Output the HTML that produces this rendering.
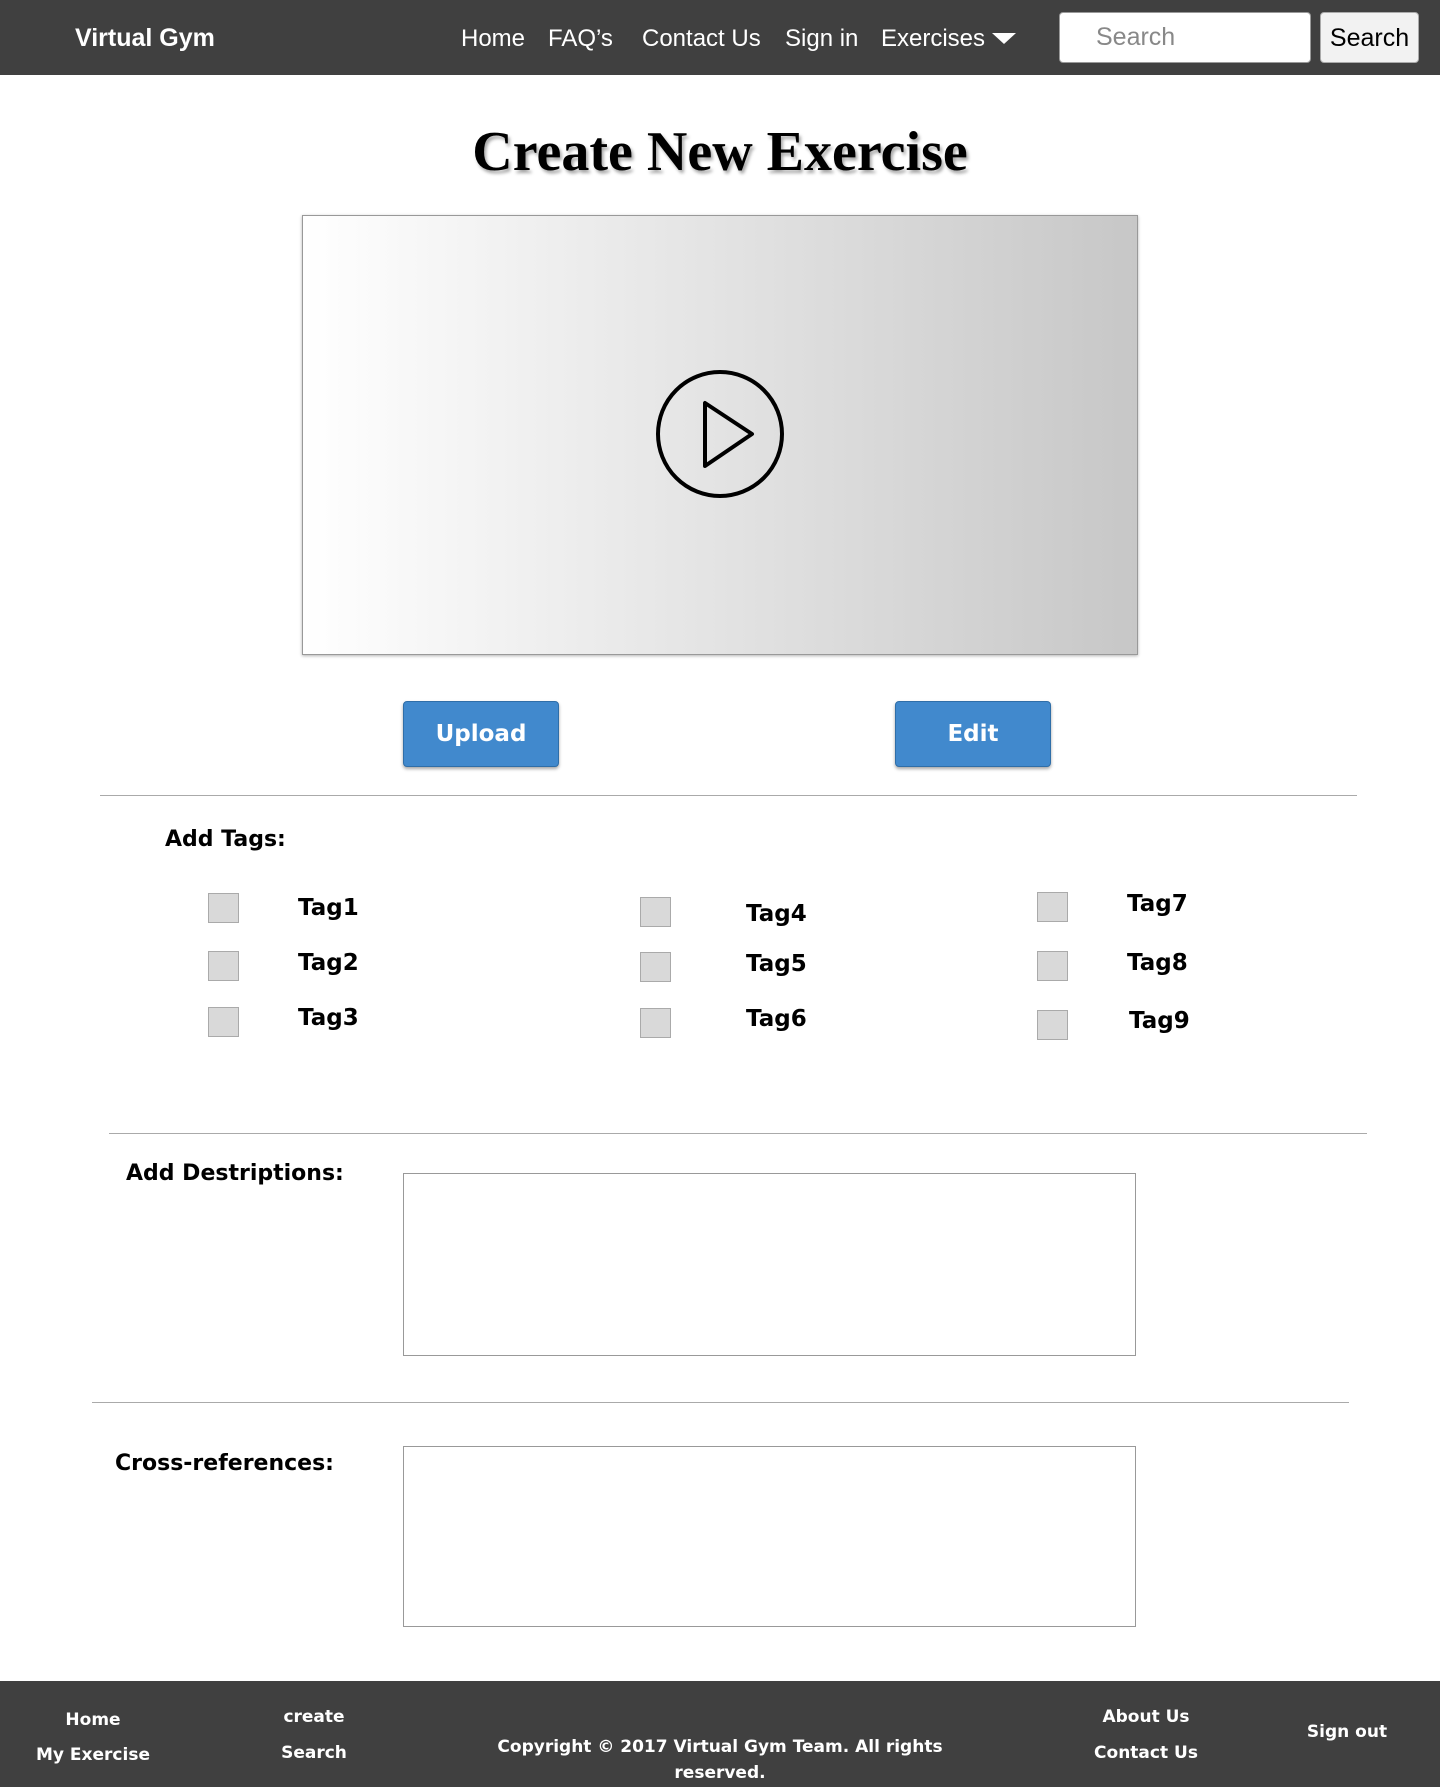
<!DOCTYPE html>
<html><head><meta charset="utf-8"><style>
*{margin:0;padding:0;box-sizing:border-box}
body{width:1440px;height:1787px;position:relative;background:#fff;font-family:"Liberation Sans",sans-serif;overflow:hidden}
.a{position:absolute}
.dj{font-family:"DejaVu Sans",sans-serif;font-weight:bold}
.nav{left:0;top:0;width:1440px;height:75px;background:#404040}
.nl{color:#fff;font-size:24px;top:25px}
.b{font-weight:bold}
.cb{position:absolute;width:31px;height:30px;background:#d9d9d9;border:1px solid #aaa}
.tg{position:absolute;font-family:"DejaVu Sans",sans-serif;font-weight:bold;font-size:23px;color:#000}
.ln{position:absolute;height:1px;background:#aaa}
.ft{position:absolute;color:#fff;font-family:"DejaVu Sans",sans-serif;font-weight:bold;font-size:17px;transform:translateX(-50%);white-space:nowrap;text-align:center}
.lbl{position:absolute;font-family:"DejaVu Sans",sans-serif;font-weight:bold;font-size:22px}
.ta{position:absolute;left:403px;width:733px;border:1px solid #999;background:#fff}
.btn{position:absolute;top:701px;width:156px;height:66px;background:#4189cd;border:1px solid #2f6ea8;border-radius:4px;color:#fff;font-family:"DejaVu Sans",sans-serif;font-weight:bold;font-size:23px;text-align:center;line-height:64px;box-shadow:0 2px 3px rgba(0,0,0,.35)}
</style></head><body>
<div class="a nav"></div>
<div class="a b" style="left:75px;top:24px;color:#fff;font-size:25px">Virtual Gym</div>
<div class="a nl" style="left:461px">Home</div>
<div class="a nl" style="left:548px">FAQ’s</div>
<div class="a nl" style="left:642px">Contact Us</div>
<div class="a nl" style="left:785px">Sign in</div>
<div class="a nl" style="left:881px">Exercises</div>
<svg class="a" style="left:992px;top:33px" width="24" height="12"><polygon points="0,0 24,0 12,11" fill="#fff"/></svg>
<div class="a" style="left:1059px;top:12px;width:252px;height:51px;background:#fff;border:1px solid #999;border-radius:4px;color:#888;font-size:25px;padding:10px 0 0 36px">Search</div>
<div class="a" style="left:1320px;top:12px;width:99px;height:51px;background:#f2f2f2;border:1px solid #aaa;border-radius:4px;color:#000;font-size:25px;text-align:center;line-height:51px">Search</div>
<div class="a" style="left:0;top:120px;width:1440px;text-align:center;font-family:'Liberation Serif',serif;font-weight:bold;font-size:56px;color:#000;text-shadow:2px 3px 3px rgba(0,0,0,.35)">Create New Exercise</div>
<div class="a" style="left:302px;top:215px;width:836px;height:440px;border:1px solid #999;background:linear-gradient(to right,#fff,#c7c7c7);box-shadow:0 1px 3px rgba(0,0,0,.3)"></div>
<svg class="a" style="left:652px;top:366px" width="136" height="136"><circle cx="68" cy="68" r="62" fill="none" stroke="#000" stroke-width="4"/><polygon points="53,37 53,100 100,68" fill="none" stroke="#000" stroke-width="4" stroke-linejoin="round"/></svg>
<div class="btn" style="left:403px">Upload</div>
<div class="btn" style="left:895px">Edit</div>
<div class="ln" style="left:100px;top:795px;width:1257px"></div>
<div class="lbl" style="left:165px;top:827px">Add Tags:</div>
<div class="cb" style="left:208px;top:893px"></div><div class="tg" style="left:298px;top:895px">Tag1</div>
<div class="cb" style="left:208px;top:951px"></div><div class="tg" style="left:298px;top:950px">Tag2</div>
<div class="cb" style="left:208px;top:1007px"></div><div class="tg" style="left:298px;top:1005px">Tag3</div>
<div class="cb" style="left:640px;top:897px"></div><div class="tg" style="left:746px;top:901px">Tag4</div>
<div class="cb" style="left:640px;top:952px"></div><div class="tg" style="left:746px;top:951px">Tag5</div>
<div class="cb" style="left:640px;top:1008px"></div><div class="tg" style="left:746px;top:1006px">Tag6</div>
<div class="cb" style="left:1037px;top:892px"></div><div class="tg" style="left:1127px;top:891px">Tag7</div>
<div class="cb" style="left:1037px;top:951px"></div><div class="tg" style="left:1127px;top:950px">Tag8</div>
<div class="cb" style="left:1037px;top:1010px"></div><div class="tg" style="left:1129px;top:1008px">Tag9</div>
<div class="ln" style="left:109px;top:1133px;width:1258px"></div>
<div class="lbl" style="left:126px;top:1161px">Add Destriptions:</div>
<div class="ta" style="top:1173px;height:183px"></div>
<div class="ln" style="left:92px;top:1402px;width:1257px"></div>
<div class="lbl" style="left:115px;top:1451px">Cross-references:</div>
<div class="ta" style="top:1446px;height:181px"></div>
<div class="a" style="left:0;top:1681px;width:1440px;height:106px;background:#404040"></div>
<div class="ft" style="left:93px;top:1710px">Home</div>
<div class="ft" style="left:93px;top:1745px">My Exercise</div>
<div class="ft" style="left:314px;top:1707px">create</div>
<div class="ft" style="left:314px;top:1743px">Search</div>
<div class="ft" style="left:720px;top:1734px;line-height:26px">Copyright © 2017 Virtual Gym Team. All rights<br>reserved.</div>
<div class="ft" style="left:1146px;top:1707px">About Us</div>
<div class="ft" style="left:1146px;top:1743px">Contact Us</div>
<div class="ft" style="left:1347px;top:1722px">Sign out</div>
</body></html>
